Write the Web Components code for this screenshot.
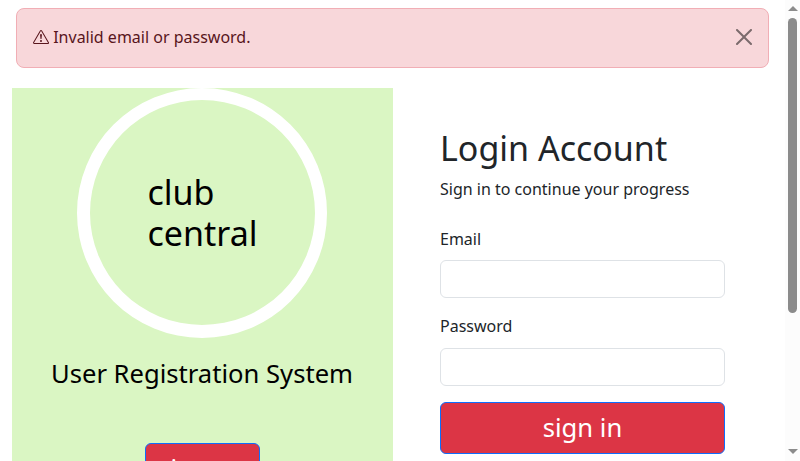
<!DOCTYPE html>
<html lang="en">
<head>
<meta charset="utf-8">
<title>Login</title>
<style>
html, body { margin: 0; height: 100%; overflow: hidden; background: #fff; }
body { font: 16px/24px "Noto Sans", "Liberation Sans", sans-serif; color: #212529; }
</style>
</head>
<body>
<login-page></login-page>
<script>
function define(name, markup) {
  const template = document.createElement('template');
  template.innerHTML = '<style>*{box-sizing:border-box}</style>' + markup;
  customElements.define(name, class extends HTMLElement {
    constructor() {
      super();
      this.attachShadow({ mode: 'open' }).append(template.content.cloneNode(true));
    }
  });
}

define('alert-banner', `
<style>
:host { display: flex; box-sizing: border-box; height: 60px; padding: 0 16px; align-items: center;
  background: #f8d7da; border: 1px solid #f1aeb5; border-radius: 8px; color: #58151c; }
.icon { width: 16px; height: 16px; margin: -2px 4.2px 0 0; }
.text { flex: 1; margin-top: -2px; }
button { display: flex; padding: 0; border: 0; background: none; color: #000; opacity: .5; margin: -2px 0 0; }
</style>
<svg class="icon" viewBox="0 0 16 16" fill="currentColor"><path d="M7.938 2.016A.13.13 0 0 1 8.002 2a.13.13 0 0 1 .063.016.15.15 0 0 1 .054.057l6.857 11.667c.036.06.035.124.002.183a.2.2 0 0 1-.054.06.1.1 0 0 1-.066.017H1.146a.1.1 0 0 1-.066-.017.2.2 0 0 1-.054-.06.18.18 0 0 1 .002-.183L7.884 2.073a.15.15 0 0 1 .054-.057m1.044-.45a1.13 1.13 0 0 0-1.96 0L.165 13.233c-.457.778.091 1.767.98 1.767h13.713c.889 0 1.438-.99.98-1.767z"/><path d="M7.002 12a1 1 0 1 1 2 0 1 1 0 0 1-2 0M7.1 5.995a.905.905 0 1 1 1.8 0l-.35 3.507a.552.552 0 0 1-1.1 0z"/></svg>
<span class="text"><slot></slot></span>
<button aria-label="Close"><svg width="16" height="16" viewBox="0 0 16 16"><path d="M.293.293a1 1 0 0 1 1.414 0L8 6.586 14.293.293a1 1 0 1 1 1.414 1.414L9.414 8l6.293 6.293a1 1 0 0 1-1.414 1.414L8 9.414l-6.293 6.293a1 1 0 0 1-1.414-1.414L6.586 8 .293 1.707a1 1 0 0 1 0-1.414z"/></svg></button>`);

define('club-logo', `
<style>
:host { display: flex; box-sizing: border-box; width: 250px; height: 250px; flex: none; margin-right: 1px; padding-top: 1px;
  border: solid #fff; border-width: 12px 12px 13px 13px; border-radius: 50%; align-items: center; justify-content: center;
  font-size: 34px; line-height: 40.8px; color: #000; }
</style>
<div><slot></slot></div>`);

define('action-button', `
<style>
:host { display: block; flex: none; }
button { display: block; width: 100%; margin: 0; padding: 6px 12px; border: 1px solid #0d6efd; border-radius: 6px;
  background: #dc3545; color: #fff; font: inherit; font-size: 25.6px; line-height: 38.4px; }
</style>
<button><slot></slot></button>`);

define('brand-panel', `
<style>
:host { display: flex; flex-direction: column; align-items: center; width: 381px; flex: none;
  background: #daf6c3; color: #000; overflow: hidden; }
.title { font-size: 25.6px; line-height: 38.4px; margin: 17px 1px 49.6px 0; }
</style>
<club-logo>club<br>central</club-logo>
<div class="title">User Registration System</div>
<action-button>sign up</action-button>`);

define('form-field', `
<style>
:host { display: block; margin-bottom: 16px; }
label { display: block; height: 25px; margin-bottom: var(--label-gap, 8px); }
input { display: block; width: 100%; height: 38px; margin: 0; padding: 6px 12px; border: 1px solid #dee2e6; border-radius: 6px; background: #fff; outline: none; }
</style>
<label><slot></slot></label><input>`);

define('login-form', `
<style>
:host { display: block; width: 285px; margin-left: 47px; padding-top: 40px; }
h1 { margin: 0 0 8px; font-size: 34px; line-height: 41px; font-weight: 400; }
p { margin: 0 0 26px; }
.password { --label-gap: 9px; }
</style>
<h1>Login Account</h1>
<p>Sign in to continue your progress</p>
<form-field>Email</form-field>
<form-field class="password">Password</form-field>
<action-button>sign in</action-button>`);

define('scroll-track', `
<style>
:host { display: flex; flex-direction: column; align-items: center; box-sizing: border-box;
  width: 15px; flex: none; padding: 6px 0; background: #fcfcfc; }
svg { display: block; width: 10px; height: 6px; fill: #8b8b8b; }
.thumb { width: 9px; height: 295px; margin-top: 6px; border-radius: 5px; background: #8b8b8b; }
.down { margin-top: auto; }
</style>
<svg viewBox="0 0 10 6"><path d="M5 0 10 5H0z"/></svg>
<div class="thumb"></div>
<svg class="down" viewBox="0 0 10 6"><path d="M0 0h10L5 5z"/></svg>`);

define('login-page', `
<style>
:host { display: flex; height: 100vh; overflow: hidden; }
main { display: flex; flex-direction: column; flex: 1; min-width: 0; }
alert-banner { margin: 8px 16px 20px; flex: none; }
.columns { display: flex; flex: 1; min-height: 0; padding-left: 12px; }
</style>
<main>
  <alert-banner>Invalid email or password.</alert-banner>
  <div class="columns"><brand-panel></brand-panel><login-form></login-form></div>
</main>
<scroll-track></scroll-track>`);
</script>
</body>
</html>
